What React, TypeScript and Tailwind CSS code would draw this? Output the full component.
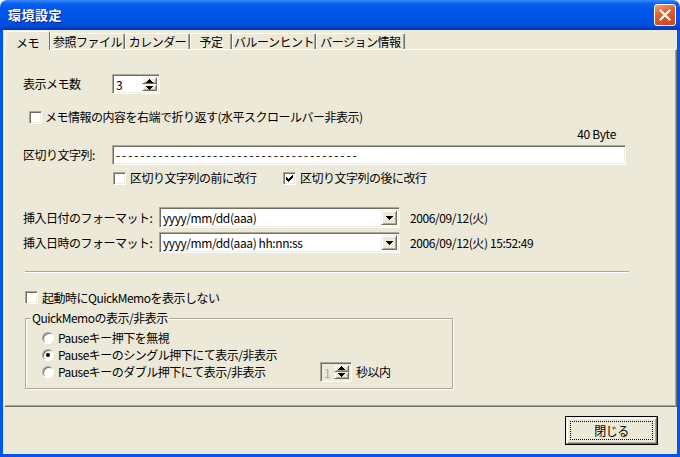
import React from "react";

const font = "font-['Noto_Sans_CJK_JP',sans-serif]";

// classic sunken edge (2px look)
const sunken =
  "border border-t-[#ACA899] border-l-[#ACA899] border-r-white border-b-white shadow-[inset_1px_1px_0_#716F64,inset_-1px_-1px_0_#F1EFE2]";
// classic raised edge
const raised =
  "bg-[#ECE9D8] border border-t-[#F1EFE2] border-l-[#F1EFE2] border-r-[#716F64] border-b-[#716F64] shadow-[inset_1px_1px_0_#fff,inset_-1px_-1px_0_#ACA899]";

function Check({ checked = false }: { checked?: boolean }) {
  return (
    <span
      className={`w-[13px] h-[13px] shrink-0 bg-white flex items-center justify-center ${sunken}`}
    >
      {checked && (
        <svg width="7" height="7" viewBox="0 0 7 7" shapeRendering="crispEdges">
          <path d="M0 2h1v1h1v1h1v-1h1v-1h1v-1h1v-1h1v3h-1v1h-1v1h-1v1h-1v1h-1v-1h-1v-1h-1z" fill="#000" />
        </svg>
      )}
    </span>
  );
}

function Radio({ checked = false }: { checked?: boolean }) {
  return (
    <span className="w-[12px] h-[12px] shrink-0 rounded-full bg-white border border-t-[#ACA899] border-l-[#ACA899] border-r-white border-b-white shadow-[inset_1px_1px_0_#716F64] flex items-center justify-center">
      {checked && <span className="w-[4px] h-[4px] rounded-full bg-black" />}
    </span>
  );
}

function Arrow({ dir, color = "#000" }: { dir: "up" | "down"; color?: string }) {
  return (
    <svg width="7" height="4" viewBox="0 0 7 4" shapeRendering="crispEdges">
      <path d={dir === "up" ? "M3 0h1v1h1v1h1v1h1v1h-7v-1h1v-1h1v-1h1z" : "M0 0h7v1h-1v1h-1v1h-1v1h-1v-1h-1v-1h-1v-1h-1z"} fill={color} />
    </svg>
  );
}

function Spin({ value, width, disabled = false }: { value: string; width: string; disabled?: boolean }) {
  return (
    <div className={`${width} h-[20px] flex items-stretch p-[2px] ${disabled ? "bg-[#ECE9D8]" : "bg-white"} ${sunken}`}>
      <span className={`flex-1 leading-[15px] pl-[1px] text-[12px] ${disabled ? "text-[#ACA899]" : "text-black"}`}>{value}</span>
      <div className="flex flex-col w-[15px]">
        <div className={`flex-1 flex items-center justify-center ${raised}`}>
          <Arrow dir="up" />
        </div>
        <div className={`flex-1 flex items-center justify-center ${raised}`}>
          <Arrow dir="down" />
        </div>
      </div>
    </div>
  );
}

function Combo({ value }: { value: string }) {
  return (
    <div className={`w-[241px] h-[21px] bg-white flex items-stretch p-[2px] ${sunken}`}>
      <span className="flex-1 pl-[1px] text-[12px] leading-[16px] tracking-[-0.4px]">{value}</span>
      <div className={`w-[16px] flex items-center justify-center ${raised}`}>
        <Arrow dir="down" />
      </div>
    </div>
  );
}

const tabs = [
  { label: "参照ファイル", w: "w-[75px]" },
  { label: "カレンダー", w: "w-[65px]" },
  { label: "予定", w: "w-[42px]" },
  { label: "バルーンヒント", w: "w-[84px]" },
  { label: "バージョン情報", w: "w-[89px]" },
];

export default function App() {
  return (
    <div className={`w-[680px] h-[457px] bg-white flex flex-col text-black text-[12px] tracking-[-0.5px] ${font}`}>
      {/* title bar */}
      <div className="h-[30px] shrink-0 rounded-t-[7px] flex items-center pl-[8px] pr-[4px] bg-[linear-gradient(180deg,#3A8CFF_0%,#0A62F0_12%,#0055E8_35%,#0052E4_70%,#0049D6_88%,#0036B5_100%)]">
        <span className="flex-1 text-white font-bold text-[13px] tracking-[0.5px] [text-shadow:1px_1px_0_#0A1E80]">
          環境設定
        </span>
        <div className="w-[22px] h-[22px] rounded-[3px] border border-white bg-[linear-gradient(160deg,#F0A080_0%,#E0602E_40%,#CC4418_100%)] flex items-center justify-center">
          <svg width="12" height="12" viewBox="0 0 12 12">
            <path d="M1.5 1.5L10.5 10.5M10.5 1.5L1.5 10.5" stroke="#fff" strokeWidth="2.2" strokeLinecap="square" />
          </svg>
        </div>
      </div>

      {/* client area */}
      <div className="flex-1 flex flex-col bg-[#ECE9D8] border-x-[3px] border-b-[3px] border-[#0055EA]">
        {/* tabs */}
        <div className="h-[19px] flex items-end pl-[2px]">
          <div className="relative z-10 w-[45px] h-[19px] -mb-[1px] bg-[#ECE9D8] border-t border-l border-t-white border-l-white border-r border-r-[#716F64] rounded-t-[2px] flex items-start justify-center pt-[2px]">
            メモ
          </div>
          {tabs.map((t) => (
            <div
              key={t.label}
              className={`${t.w} h-[16px] bg-[#ECE9D8] border-t border-l border-t-white border-l-white border-r border-r-[#716F64] shadow-[inset_-1px_0_0_#ACA899] rounded-t-[2px] flex items-center justify-center leading-[14px]`}
            >
              {t.label}
            </div>
          ))}
        </div>

        {/* tab panel */}
        <div className="ml-[1px] w-[673px] h-[358px] flex flex-col border-t border-l border-t-white border-l-white border-r border-b border-r-[#716F64] border-b-[#716F64] shadow-[inset_-1px_-1px_0_#ACA899]">
          <div className="mt-[24px] ml-[18px] h-[20px] flex items-center">
            <span className="w-[89px]">表示メモ数</span>
            <Spin value="3" width="w-[48px]" />
          </div>

          <div className="mt-[15px] ml-[24px] h-[16px] flex items-center gap-[3px]">
            <Check />
            <span>メモ情報の内容を右端で折り返す(水平スクロールバー非表示)</span>
          </div>

          <div className="mt-[2px] h-[14px] flex justify-end pr-[60px] leading-[14px] tracking-[-0.3px]">40 Byte</div>

          <div className="mt-[4px] ml-[18px] h-[20px] flex items-center">
            <span className="w-[89px]">区切り文字列:</span>
            <div className={`w-[514px] h-[20px] bg-white pl-[3px] leading-[17px] tracking-[1.9px] ${sunken}`}>
              ----------------------------------------
            </div>
          </div>

          <div className="mt-[6px] ml-[108px] h-[14px] flex items-center">
            <div className="w-[170px] flex items-center gap-[4px]">
              <Check />
              <span>区切り文字列の前に改行</span>
            </div>
            <div className="flex items-center gap-[4px]">
              <Check checked />
              <span>区切り文字列の後に改行</span>
            </div>
          </div>

          <div className="mt-[22px] ml-[18px] h-[21px] flex items-center">
            <span className="w-[136px]">挿入日付のフォーマット:</span>
            <Combo value="yyyy/mm/dd(aaa)" />
            <span className="ml-[10px] tracking-[-0.4px]">2006/09/12(火)</span>
          </div>

          <div className="mt-[4px] ml-[18px] h-[21px] flex items-center">
            <span className="w-[136px]">挿入日時のフォーマット:</span>
            <Combo value="yyyy/mm/dd(aaa) hh:nn:ss" />
            <span className="ml-[10px] tracking-[-0.4px]">2006/09/12(火) 15:52:49</span>
          </div>

          <div className="mt-[18px] ml-[20px] w-[604px] h-[2px] border-t border-b border-t-[#ACA899] border-b-white" />

          <div className="mt-[18px] ml-[20px] h-[13px] flex items-center gap-[4px]">
            <Check />
            <span>起動時にQuickMemoを表示しない</span>
          </div>

          <fieldset className="mt-[7px] ml-[20px] w-[428px] h-[78px] border border-[#ACA899] shadow-[1px_1px_0_#fff,inset_1px_1px_0_#fff] px-0 pb-0 m-0">
            <legend className="ml-[5px] px-[1px] leading-[14px]">QuickMemoの表示/非表示</legend>
            <div className="mt-[4px] ml-[16px] flex flex-col">
              <div className="h-[17px] flex items-center gap-[4px]">
                <Radio />
                <span>Pauseキー押下を無視</span>
              </div>
              <div className="h-[17px] flex items-center gap-[4px]">
                <Radio checked />
                <span>Pauseキーのシングル押下にて表示/非表示</span>
              </div>
              <div className="h-[17px] flex items-center">
                <div className="w-[278px] flex items-center gap-[4px]">
                  <Radio />
                  <span>Pauseキーのダブル押下にて表示/非表示</span>
                </div>
                <Spin value="1" width="w-[32px]" disabled />
                <span className="ml-[4px]">秒以内</span>
              </div>
            </div>
          </fieldset>
        </div>

        {/* buttons */}
        <div className="mt-[9px] flex justify-end pr-[19px]">
          <div className="w-[93px] h-[29px] border border-black">
            <div className={`w-full h-full p-[3px] ${raised}`}>
              <div className="w-full h-full border border-dotted border-black flex items-center justify-center">
                閉じる
              </div>
            </div>
          </div>
        </div>
      </div>
    </div>
  );
}
